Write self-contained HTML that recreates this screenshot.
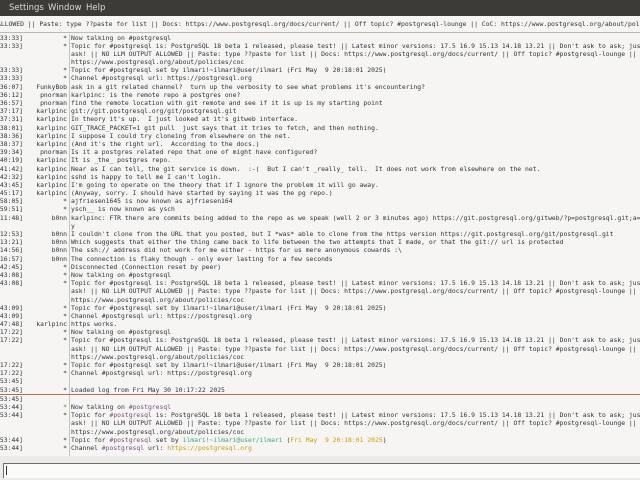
<!DOCTYPE html>
<html><head><meta charset="utf-8">
<style>
html,body{margin:0;padding:0;width:640px;height:480px;overflow:hidden;background:#f6f5f4;}
body{position:relative;font-family:"DejaVu Sans Mono","Liberation Mono",monospace;font-size:6.4px;color:#2e3436;}
#menu{position:absolute;left:0;top:0;width:640px;height:16px;background:#3c3b37;color:#dfdbd2;font-family:"DejaVu Sans","Liberation Sans",sans-serif;font-size:8.5px;}
#menu span{position:absolute;top:3px;}
#topic{position:absolute;left:0;top:16px;width:640px;height:16px;background:#f6f5f4;border-bottom:1px solid #bdb9b3;overflow:hidden;white-space:pre;}
#topic div{position:absolute;left:-3px;top:4px;}
#log{position:absolute;left:0;top:33.5px;width:640px;height:422px;background:#f6f5f4;overflow:hidden;}
#vl{position:absolute;left:69px;top:0;width:1px;height:423px;background:#c8c5c0;}
.r{position:relative;height:8.2px;line-height:8.2px;white-space:pre;}
.r i{font-style:normal;position:absolute;right:617px;top:0;}
.r b{font-weight:normal;position:absolute;left:10px;width:57px;text-align:right;top:0;}
.r span{position:absolute;left:71px;top:0;}
.sep{position:relative;height:0;border-top:1px solid #b5704f;margin-top:0px;width:640px;}
.p{color:#75507b}.g{color:#3aa57a}.y{color:#c4a000}.gs{color:#4e9a06}
#bot{position:absolute;left:0;top:456px;width:640px;height:24px;background:#ecebe9;}
#inp{position:absolute;left:3px;top:463px;width:640px;height:14px;background:#fbfbfa;border-top:1px solid #6f6e6b;border-left:1px solid #6f6e6b;}
#caret{position:absolute;left:6px;top:466px;width:1px;height:9px;background:#2e3436;}
</style></head><body>
<div id="menu"><span style="left:9px">Settings</span><span style="left:48px">Window</span><span style="left:86px">Help</span></div>
<div id="topic"><div>ALLOWED || Paste: type ??paste for list || Docs: https://www.postgresql.org/docs/current/ || Off topic? #postgresql-lounge || CoC: https://www.postgresql.org/about/policies/coc</div></div>
<div id="log">
<div id="vl"></div>
<div class="r"><i>33:33]</i><b>*</b><span>Now talking on #postgresql</span></div>
<div class="r"><i>33:33]</i><b>*</b><span>Topic for #postgresql is: PostgreSQL 18 beta 1 released, please test! || Latest minor versions: 17.5 16.9 15.13 14.18 13.21 || Don't ask to ask; just</span></div>
<div class="r"><span>ask! || NO LLM OUTPUT ALLOWED || Paste: type ??paste for list || Docs: https://www.postgresql.org/docs/current/ || Off topic? #postgresql-lounge || CoC:</span></div>
<div class="r"><span>https://www.postgresql.org/about/policies/coc</span></div>
<div class="r"><i>33:33]</i><b>*</b><span>Topic for #postgresql set by ilmari!~ilmari@user/ilmari (Fri May  9 20:18:01 2025)</span></div>
<div class="r"><i>33:33]</i><b>*</b><span>Channel #postgresql url: https://postgresql.org</span></div>
<div class="r"><i>36:07]</i><b>FunkyBob</b><span>ask in a git related channel?  turn up the verbosity to see what problems it's encountering?</span></div>
<div class="r"><i>36:12]</i><b>pnorman</b><span>karlpinc: is the remote repo a postgres one?</span></div>
<div class="r"><i>36:57]</i><b>pnorman</b><span>find the remote location with git remote and see if it is up is my starting point</span></div>
<div class="r"><i>37:17]</i><b>karlpinc</b><span>git://git.postgresql.org/git/postgresql.git</span></div>
<div class="r"><i>37:31]</i><b>karlpinc</b><span>In theory it's up.  I just looked at it's gitweb interface.</span></div>
<div class="r"><i>38:01]</i><b>karlpinc</b><span>GIT_TRACE_PACKET=1 git pull  just says that it tries to fetch, and then nothing.</span></div>
<div class="r"><i>38:36]</i><b>karlpinc</b><span>I suppose I could try cloneing from elsewhere on the net.</span></div>
<div class="r"><i>38:37]</i><b>karlpinc</b><span>(And it's the right url.  According to the docs.)</span></div>
<div class="r"><i>39:34]</i><b>pnorman</b><span>Is it a postgres related repo that one of might have configured?</span></div>
<div class="r"><i>40:19]</i><b>karlpinc</b><span>It is _the_ postgres repo.</span></div>
<div class="r"><i>41:42]</i><b>karlpinc</b><span>Near as I can tell, the git service is down.  :-(  But I can't _really_ tell.  It does not work from elsewhere on the net.</span></div>
<div class="r"><i>42:32]</i><b>karlpinc</b><span>sshd is happy to tell me I can't login.</span></div>
<div class="r"><i>43:45]</i><b>karlpinc</b><span>I'm going to operate on the theory that if I ignore the problem it will go away.</span></div>
<div class="r"><i>45:17]</i><b>karlpinc</b><span>(Anyway, sorry. I should have started by saying it was the pg repo.)</span></div>
<div class="r"><i>58:05]</i><b>*</b><span>ajfriesen1645 is now known as ajfriesen164</span></div>
<div class="r"><i>59:51]</i><b>*</b><span>ysch__ is now known as ysch</span></div>
<div class="r"><i>11:48]</i><b>b0nn</b><span>karlpinc: FTR there are commits being added to the repo as we speak (well 2 or 3 minutes ago) https://git.postgresql.org/gitweb/?p=postgresql.git;a=summar</span></div>
<div class="r"><span>y</span></div>
<div class="r"><i>12:53]</i><b>b0nn</b><span>I couldn't clone from the URL that you posted, but I *was* able to clone from the https version https://git.postgresql.org/git/postgresql.git</span></div>
<div class="r"><i>13:21]</i><b>b0nn</b><span>Which suggests that either the thing came back to life between the two attempts that I made, or that the git:// url is protected</span></div>
<div class="r"><i>14:56]</i><b>b0nn</b><span>The ssh:// address did not work for me either - https for us mere anonymous cowards :\</span></div>
<div class="r"><i>16:57]</i><b>b0nn</b><span>The connection is flaky though - only ever lasting for a few seconds</span></div>
<div class="r"><i>42:45]</i><b>*</b><span>Disconnected (Connection reset by peer)</span></div>
<div class="r"><i>43:08]</i><b>*</b><span>Now talking on #postgresql</span></div>
<div class="r"><i>43:08]</i><b>*</b><span>Topic for #postgresql is: PostgreSQL 18 beta 1 released, please test! || Latest minor versions: 17.5 16.9 15.13 14.18 13.21 || Don't ask to ask; just</span></div>
<div class="r"><span>ask! || NO LLM OUTPUT ALLOWED || Paste: type ??paste for list || Docs: https://www.postgresql.org/docs/current/ || Off topic? #postgresql-lounge || CoC:</span></div>
<div class="r"><span>https://www.postgresql.org/about/policies/coc</span></div>
<div class="r"><i>43:09]</i><b>*</b><span>Topic for #postgresql set by ilmari!~ilmari@user/ilmari (Fri May  9 20:18:01 2025)</span></div>
<div class="r"><i>43:09]</i><b>*</b><span>Channel #postgresql url: https://postgresql.org</span></div>
<div class="r"><i>47:48]</i><b>karlpinc</b><span>https works.</span></div>
<div class="r"><i>17:22]</i><b>*</b><span>Now talking on #postgresql</span></div>
<div class="r"><i>17:22]</i><b>*</b><span>Topic for #postgresql is: PostgreSQL 18 beta 1 released, please test! || Latest minor versions: 17.5 16.9 15.13 14.18 13.21 || Don't ask to ask; just</span></div>
<div class="r"><span>ask! || NO LLM OUTPUT ALLOWED || Paste: type ??paste for list || Docs: https://www.postgresql.org/docs/current/ || Off topic? #postgresql-lounge || CoC:</span></div>
<div class="r"><span>https://www.postgresql.org/about/policies/coc</span></div>
<div class="r"><i>17:22]</i><b>*</b><span>Topic for #postgresql set by ilmari!~ilmari@user/ilmari (Fri May  9 20:18:01 2025)</span></div>
<div class="r"><i>17:22]</i><b>*</b><span>Channel #postgresql url: https://postgresql.org</span></div>
<div class="r"><i>53:45]</i></div>
<div class="r"><i>53:45]</i><b>*</b><span>Loaded log from Fri May 30 10:17:22 2025</span></div>
<div class="sep"></div>
<div class="r"><i>53:45]</i></div>
<div class="r"><i>53:44]</i><b class="gs">*</b><span>Now talking on <span class="p" style="position:static">#postgresql</span></span></div>
<div class="r"><i>53:44]</i><b>*</b><span>Topic for <span class="p" style="position:static">#postgresql</span> is: PostgreSQL 18 beta 1 released, please test! || Latest minor versions: 17.5 16.9 15.13 14.18 13.21 || Don't ask to ask; just</span></div>
<div class="r"><span>ask! || NO LLM OUTPUT ALLOWED || Paste: type ??paste for list || Docs: https://www.postgresql.org/docs/current/ || Off topic? #postgresql-lounge || CoC:</span></div>
<div class="r"><span>https://www.postgresql.org/about/policies/coc</span></div>
<div class="r"><i>53:44]</i><b>*</b><span>Topic for <span class="p" style="position:static">#postgresql</span> set by <span class="g" style="position:static">ilmari!~ilmari@user/ilmari</span> (<span class="y" style="position:static">Fri May  9 20:18:01 2025</span>)</span></div>
<div class="r"><i>53:44]</i><b>*</b><span>Channel <span class="p" style="position:static">#postgresql</span> url: <span class="y" style="position:static">https://postgresql.org</span></span></div>
</div>
<div id="bot"></div>
<div id="inp"></div>
<div id="caret"></div>
</body></html>
